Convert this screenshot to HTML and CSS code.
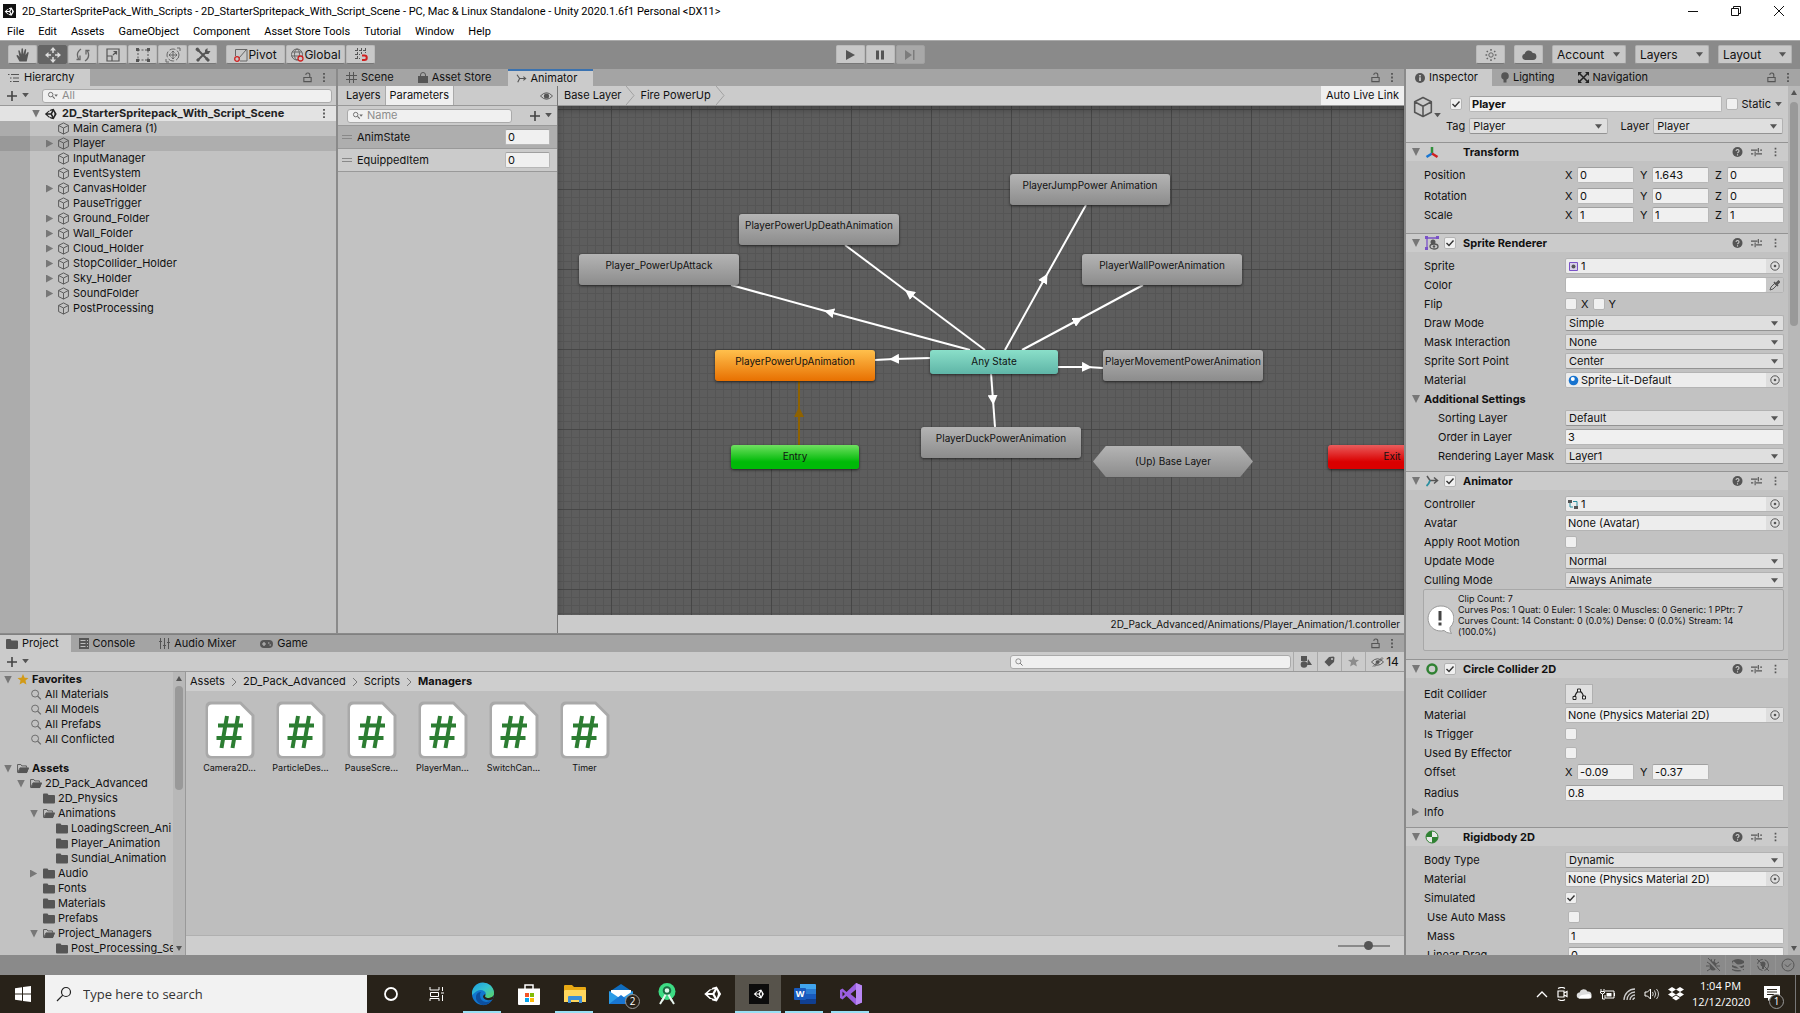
FILE: index.html
```html
<!DOCTYPE html>
<html lang="en">
<head>
    <meta charset="UTF-8">
    <meta name="viewport" content="width=device-width, initial-scale=1.0">
    <title>2D_StarterSpritePack_With_Scripts - Unity</title>
    <link rel="stylesheet" href="styles.css">
</head>
<body>
    <!-- shared icons -->
    <svg class="sprites" aria-hidden="true">
        <symbol id="cube" viewBox="0 0 14 14"><path d="M7 1l5.300 2.700v6.600L7 13l-5.300-2.700V3.700zM1.700 3.700L7 6.500l5.300-2.800M7 6.500V13" fill="none" stroke="#555" stroke-linejoin="round"/></symbol>
        <symbol id="unity" viewBox="0 0 16 16"><path d="M14.500 8L11 2 7.500 2.900 6.800 4.200H5.400L1 8l4.400 3.900h1.400l.7 1.200L11 14zM6.300 4.800l3.100-.8-1.800 3.200H3.800zM3.800 8.800h3.800l1.800 3.200-3.100-.8zM11 11.200L9.200 8 11 4.800l1 3.200z" fill="currentColor" fill-rule="evenodd"/></symbol>
        <symbol id="lock" viewBox="0 0 12 12"><path d="M2 6h8v4.500H2zM8.500 6V3.500a2.200 2.200 0 0 0-4.400-.3" fill="none" stroke="#555" stroke-width="1.200"/></symbol>
        <symbol id="dots" viewBox="0 0 4 12"><path d="M1 1h2v2H1zM1 5h2v2H1zM1 9h2v2H1z" fill="#555"/></symbol>
        <symbol id="plus" viewBox="0 0 12 12"><path d="M6 1v10M1 6h10" stroke="#444" stroke-width="1.600"/></symbol>
        <symbol id="down" viewBox="0 0 8 6"><path d="M0 0h8L4 5z" fill="#555"/></symbol>
        <symbol id="search" viewBox="0 0 12 12"><circle cx="5" cy="5" r="3.800" fill="none" stroke="#666"/><path d="M7.800 7.800l3.500 3.500" stroke="#666" stroke-width="1.400"/></symbol>
        <symbol id="searchdrop" viewBox="0 0 12 10"><circle cx="4" cy="4" r="2.500" fill="none" stroke="#666"/><path d="M6 6l2.500 2.500" stroke="#666" stroke-width="1.200"/><path d="M8 4h4l-2 2.500z" fill="#666"/></symbol>
        <symbol id="folder" viewBox="0 0 12 10"><path d="M0 1q0-1 1-1h3.500l1 1.500H11q1 0 1 1V9q0 1-1 1H1q-1 0-1-1z" fill="#555"/></symbol>
        <symbol id="folderopen" viewBox="0 0 13 10"><path d="M.6 9V.7h3.600l1 1.500h5V4M.8 9.400L3.300 4.300h9.200L10.500 9.400z" fill="none" stroke="#555"/><path d="M1 9.800L3.400 4.500h9.400L10.600 9.800z" fill="#555"/></symbol>
        <symbol id="help" viewBox="0 0 10 10"><circle cx="5" cy="5" r="5" fill="#555"/><path d="M3.500 3.900a1.500 1.500 0 1 1 2.200 1.400q-.7.400-.7 1M5 7.300v1.200" fill="none" stroke="#ccc" stroke-width="1.100"/></symbol>
        <symbol id="preset" viewBox="0 0 12 10"><path d="M0 3h7M10 3h2M0 7h2.500M5.500 7H12M8 .5v5M4.500 4.500v5" stroke="#555" stroke-width="1.200"/></symbol>
        <symbol id="picker" viewBox="0 0 10 10"><circle cx="5" cy="5" r="4.200" fill="none" stroke="#555"/><circle cx="5" cy="5" r="1.300" fill="#555"/></symbol>
        <symbol id="anim" viewBox="0 0 14 12"><path d="M1 1l3.500 5H12M4.500 6L2 11M9.500 3.500L12.500 6 9.500 8.500" fill="none" stroke="#555" stroke-width="1.500"/></symbol>
        <symbol id="eye" viewBox="0 0 14 8"><path d="M.5 4Q7-3 13.500 4 7 11 .5 4z" fill="none" stroke="#555"/><circle cx="7" cy="4" r="2.800" fill="#555"/></symbol>
        <symbol id="star" viewBox="0 0 12 12"><path d="M6 0l1.700 4 4.300.4-3.300 2.800 1 4.300L6 9.200l-3.700 2.300 1-4.300L0 4.400 4.300 4z" fill="currentColor"/></symbol>
        <symbol id="grip" viewBox="0 0 10 6"><path d="M0 1.500h10M0 4.500h10" stroke="#888"/></symbol>
        <symbol id="script" viewBox="0 0 52 60"><path d="M7 1.500h30L50.500 15v38q0 5.500-5.500 5.500H7q-5.500 0-5.500-5.500V7Q1.500 1.500 7 1.500z" fill="#a9a9a9"/><path d="M8 4.500h28L47.500 16v36q0 4-4 4H8q-4 0-4-4V8.500q0-4 4-4z" fill="#fff"/><path d="M23 16l-5.500 32M34 16l-5.500 32M14 25.500h25M12.500 38h25" stroke="#2c7d32" stroke-width="4" fill="none"/></symbol>
    </svg>

    <header class="titlebar">
        <span class="app-icon"><svg width="11" height="11"><use href="#unity"/></svg></span>
        <h1>2D_StarterSpritePack_With_Scripts - 2D_StarterSpritepack_With_Script_Scene - PC, Mac &amp; Linux Standalone - Unity 2020.1.6f1 Personal &lt;DX11&gt;</h1>
        <div class="window-buttons">
            <button aria-label="Minimize"><svg width="12" height="12"><path d="M1 6.500h10" stroke="#111"/></svg></button>
            <button aria-label="Restore"><svg width="12" height="12"><path d="M1.500 3.500h7v7h-7zM3.500 3.500v-2h7v7h-2" fill="none" stroke="#111"/></svg></button>
            <button aria-label="Close"><svg width="12" height="12"><path d="M1 1l10 10M11 1L1 11" stroke="#111"/></svg></button>
        </div>
    </header>
    <nav class="menubar">
        <button>File</button><button>Edit</button><button>Assets</button><button>GameObject</button><button>Component</button><button>Asset Store Tools</button><button>Tutorial</button><button>Window</button><button>Help</button>
    </nav>

    <div class="toolbar">
        <div class="tool-left">
            <div class="tool-group">
                <button aria-label="Hand"><svg width="16" height="16"><path d="M4.500 14.500L1.500 9q0-1.500 1.500-.8L4.500 10 3.300 4q.2-1.300 1.300-.4L6.200 7.500 6.500 1.800Q7.300.6 8 1.800l.3 5.500L9.800 2.500q1-.9 1.400.3L10.500 8l2-2.800q1.200-.4 1.100.8L11.700 14.500z" fill="#555"/></svg></button>
                <button class="on" aria-label="Move"><svg width="16" height="16"><path d="M8 1v5M8 10v5M1 8h5M10 8h5" stroke="#ddd" stroke-width="1.500"/><path d="M8 0l3 3.500H5zM8 16l3-3.500H5zM0 8l3.500-3v6zM16 8l-3.500-3v6z" fill="#ddd"/></svg></button>
                <button aria-label="Rotate"><svg width="16" height="16"><path d="M6 2Q0 6 4 13M1.500 12.500h3.500v-4M10 14q6-4 2-11M14.500 3.500H11v4" fill="none" stroke="#666" stroke-width="1.300"/></svg></button>
                <button aria-label="Scale"><svg width="16" height="16"><path d="M2 2h12v12H2zM2 9h5v5M8 8l3.500-3.500M8.500 4.500h3v3" fill="none" stroke="#555" stroke-width="1.200"/></svg></button>
                <button aria-label="Rect"><svg width="16" height="16"><path d="M3 3h10v10H3z" fill="none" stroke="#555" stroke-dasharray="2 1.500"/><path d="M1 1h3v3H1zM12 1h3v3h-3zM1 12h3v3H1zM12 12h3v3h-3z" fill="#555"/></svg></button>
                <button aria-label="Transform"><svg width="16" height="16"><circle cx="8" cy="8" r="6" fill="none" stroke="#666" stroke-dasharray="6 2"/><path d="M8 4v8M4 8h8M6.500 5.500L8 4l1.500 1.500M6.500 10.500L8 12l1.500-1.500M5.500 6.500L4 8l1.500 1.500M10.500 6.500L12 8l-1.500 1.500M12 1h3v3M1 12v3h3" fill="none" stroke="#666"/></svg></button>
                <button aria-label="Custom tools"><svg width="16" height="16"><path d="M3 3l10 10M3 13l7-7" stroke="#555" stroke-width="2"/><path d="M1 1l2-.5 2 2.500-2 2L.5 3zM10 3l2.500-2v3h3L13.500 7H10zM10 12l2-2 3 3-2 2zM1 13l2-2 2 2-2 2z" fill="#555"/></svg></button>
            </div>
            <div class="tool-group pivot">
                <button><svg width="14" height="14"><path d="M1.500 8V1.500H13V13H6M5 10l7-8" fill="none" stroke="#666"/><circle cx="3" cy="11" r="2.300" fill="none" stroke="#d02020" stroke-width="1.300"/></svg>Pivot</button>
                <button><svg width="14" height="14"><circle cx="7" cy="6.500" r="5.500" fill="none" stroke="#666"/><ellipse cx="7" cy="6.500" rx="2.500" ry="5.500" fill="none" stroke="#666"/><path d="M2 4h10M1.500 8h8" stroke="#666"/><circle cx="10.500" cy="10.500" r="2.500" fill="#c8c8c8" stroke="#d02020" stroke-width="1.300"/></svg>Global</button>
            </div>
            <button aria-label="Grid snapping"><svg width="16" height="16"><path d="M4.500 1v12M8.500 1v6M12.500 1v5M2 3.500h12M2 7.500h5M2 11.500h5" stroke="#555" stroke-dasharray="3 1"/><path d="M9 8.500h2.500a2.200 2.200 0 0 1 0 4.500H9" fill="none" stroke="#d02020" stroke-width="2"/></svg></button>
        </div>
        <div class="tool-group play">
            <button aria-label="Play"><svg width="10" height="12"><path d="M1 1l9 5-9 5z" fill="#555"/></svg></button>
            <button aria-label="Pause"><svg width="10" height="12"><path d="M1 1.500h3v9H1zM6 1.500h3v9H6z" fill="#555"/></svg></button>
            <button aria-label="Step" disabled><svg width="12" height="12"><path d="M1 1l7 5-7 5zM9 1h1.500v10H9z" fill="#7c7c7c"/></svg></button>
        </div>
        <div class="tool-right">
            <button aria-label="Collaborate"><svg width="14" height="14"><circle cx="7" cy="7" r="2.200" fill="none" stroke="#666"/><path d="M7 1v1.700M7 11.300V13M1.500 7h1.700M10.800 7h1.700M2.700 3l1.200 1M10.100 10l1.200 1M2.700 11l1.200-1M10.100 4l1.200-1" stroke="#666" stroke-width="1.500"/></svg></button>
            <button aria-label="Services"><svg width="16" height="12"><path d="M4 11a3.200 3.200 0 0 1-.3-6.300A4.300 4.300 0 0 1 11.800 4 3.500 3.500 0 0 1 12 11z" fill="#555"/></svg></button>
            <select aria-label="Account"><option>Account</option></select>
            <select aria-label="Layers"><option>Layers</option></select>
            <select aria-label="Layout"><option>Layout</option></select>
        </div>
    </div>

    <main class="workspace">
        <div class="left-area">
            <div class="upper">
                <section class="panel hierarchy">
                    <div class="tabs">
                        <button class="tab active"><svg width="12" height="10"><path d="M3 1.500h8M5 5h6M5 8.500h6M0 1.500h1.500M2 5h1.500M2 8.500h1.500" stroke="#555"/></svg>Hierarchy</button>
                        <span class="tab-end"><svg width="11" height="11"><use href="#lock"/></svg><svg width="4" height="11"><use href="#dots"/></svg></span>
                    </div>
                    <div class="bar">
                        <button class="add" aria-label="Create"><svg width="12" height="12"><use href="#plus"/></svg><svg width="7" height="5"><use href="#down"/></svg></button>
                        <label class="search"><svg width="11" height="9"><use href="#searchdrop"/></svg><input type="text" placeholder="All" aria-label="Search hierarchy"></label>
                    </div>
                    <div class="scene"><i class="open"></i><svg width="14" height="14"><use href="#unity"/></svg><b>2D_StarterSpritepack_With_Script_Scene</b><svg class="more" width="4" height="11"><use href="#dots"/></svg></div>
                    <ul class="objects">
                        <li><i></i><svg><use href="#cube"/></svg>Main Camera (1)</li>
                        <li class="selected"><i class="closed"></i><svg><use href="#cube"/></svg>Player</li>
                        <li><i></i><svg><use href="#cube"/></svg>InputManager</li>
                        <li><i></i><svg><use href="#cube"/></svg>EventSystem</li>
                        <li><i class="closed"></i><svg><use href="#cube"/></svg>CanvasHolder</li>
                        <li><i></i><svg><use href="#cube"/></svg>PauseTrigger</li>
                        <li><i class="closed"></i><svg><use href="#cube"/></svg>Ground_Folder</li>
                        <li><i class="closed"></i><svg><use href="#cube"/></svg>Wall_Folder</li>
                        <li><i class="closed"></i><svg><use href="#cube"/></svg>Cloud_Holder</li>
                        <li><i class="closed"></i><svg><use href="#cube"/></svg>StopCollider_Holder</li>
                        <li><i class="closed"></i><svg><use href="#cube"/></svg>Sky_Holder</li>
                        <li><i class="closed"></i><svg><use href="#cube"/></svg>SoundFolder</li>
                        <li><i></i><svg><use href="#cube"/></svg>PostProcessing</li>
                    </ul>
                </section>

                <section class="panel animator">
                    <div class="tabs">
                        <button class="tab"><svg width="11" height="11"><path d="M3.500 0v11M7.500 0v11M0 3.500h11M0 7.500h11" stroke="#555"/></svg>Scene</button>
                        <button class="tab"><svg width="10" height="12"><path d="M0 4h10v7H0z" fill="#555"/><path d="M2.500 5V3a2.500 2.500 0 0 1 5 0v2" fill="none" stroke="#555"/></svg>Asset Store</button>
                        <button class="tab active focus"><svg width="11" height="9"><use href="#anim"/></svg>Animator</button>
                        <span class="tab-end"><svg width="11" height="11"><use href="#lock"/></svg><svg width="4" height="11"><use href="#dots"/></svg></span>
                    </div>
                    <div class="animator-body">
                        <div class="params">
                            <div class="bar modes"><button>Layers</button><button class="on">Parameters</button><button class="eye" aria-label="Hide"><svg width="13" height="8"><use href="#eye"/></svg></button></div>
                            <div class="bar"><label class="search"><svg width="11" height="9"><use href="#searchdrop"/></svg><input type="text" placeholder="Name" aria-label="Search parameters"></label><button class="add" aria-label="Add parameter"><svg width="12" height="12"><use href="#plus"/></svg><svg width="7" height="5"><use href="#down"/></svg></button></div>
                            <div class="param on"><svg width="10" height="6"><use href="#grip"/></svg><label for="animstate">AnimState</label><input id="animstate" type="text" value="0"></div>
                            <div class="param"><svg width="10" height="6"><use href="#grip"/></svg><label for="equipped">EquippedItem</label><input id="equipped" type="text" value="0"></div>
                        </div>
                        <div class="graph">
                            <div class="bar crumbs">
                                <button>Base Layer</button><svg width="9" height="19"><path d="M0 0l8 9.500L0 19" fill="none" stroke="#a0a0a0"/></svg>
                                <button>Fire PowerUp</button><svg width="9" height="19"><path d="M0 0l8 9.500L0 19" fill="none" stroke="#a0a0a0"/></svg>
                                <button class="live">Auto Live Link</button>
                            </div>
                            <div class="canvas">
                                <svg class="edges">
                                    <defs>
                                        <marker id="arrow" viewBox="0 0 10 10" refX="5" refY="5" markerWidth="10" markerHeight="10" markerUnits="userSpaceOnUse" orient="auto"><path d="M0 0l10 5-10 5z" fill="#fff"/></marker>
                                        <marker id="arrow-entry" viewBox="0 0 10 10" refX="5" refY="5" markerWidth="10" markerHeight="10" markerUnits="userSpaceOnUse" orient="auto"><path d="M0 0l10 5-10 5z"/></marker>
                                    </defs>
                                    <path d="M412 244L271 206 173 179"/>
                                    <path d="M427 244L351 187 287 139"/>
                                    <path d="M447 244L487 172 528 99"/>
                                    <path d="M464 244L520 214 585 179"/>
                                    <path d="M372 252L336 253 317 254"/>
                                    <path d="M499 261L529 261 545 262"/>
                                    <path d="M433 267L435 294 437 321"/>
                                    <path class="entry-edge" d="M241 339V306 275"/>
                                </svg>
                                <div class="node n-attack">Player_PowerUpAttack</div>
                                <div class="node n-death">PlayerPowerUpDeathAnimation</div>
                                <div class="node n-jump">PlayerJumpPower Animation</div>
                                <div class="node n-wall">PlayerWallPowerAnimation</div>
                                <div class="node n-default">PlayerPowerUpAnimation</div>
                                <div class="node small n-any">Any State</div>
                                <div class="node n-move">PlayerMovementPowerAnimation</div>
                                <div class="node n-duck">PlayerDuckPowerAnimation</div>
                                <div class="node small n-entry">Entry</div>
                                <div class="node n-up">(Up) Base Layer</div>
                                <div class="node small n-exit">Exit</div>
                            </div>
                            <div class="path">2D_Pack_Advanced/Animations/Player_Animation/1.controller</div>
                        </div>
                    </div>
                </section>
            </div>

            <section class="panel project">
                <div class="tabs">
                    <button class="tab active"><svg width="12" height="10"><use href="#folder"/></svg>Project</button>
                    <button class="tab"><svg width="10" height="11"><path d="M0 0h10v11H0z" fill="#555"/><path d="M1.500 2.500h5M1.500 5.500h5M1.500 8.500h5M8 2.500h1M8 5.500h1M8 8.500h1" stroke="#bbb"/></svg>Console</button>
                    <button class="tab"><svg width="11" height="11"><path d="M1.500 0v11M5.500 0v11M9.500 0v11M0 3.500h3M4 7.500h3M8 4.500h3" stroke="#555"/></svg>Audio Mixer</button>
                    <button class="tab"><svg width="13" height="8"><rect width="13" height="8" rx="4" fill="#555"/><path d="M2 4h4M4 2v4M8 3h1.500M9.500 5H11" stroke="#bbb" stroke-width="1.200"/></svg>Game</button>
                    <span class="tab-end"><svg width="11" height="11"><use href="#lock"/></svg><svg width="4" height="11"><use href="#dots"/></svg></span>
                </div>
                <div class="bar">
                    <button class="add" aria-label="Create asset"><svg width="12" height="12"><use href="#plus"/></svg><svg width="7" height="5"><use href="#down"/></svg></button>
                    <label class="search asset-search"><svg width="8" height="8"><use href="#search"/></svg><input type="text" aria-label="Search assets"></label>
                    <div class="filters">
                        <button aria-label="Filter by type"><svg width="12" height="12"><path d="M1 0h6v5H1zM8 3l4 6H7z" fill="#555"/><circle cx="4" cy="8.500" r="3.300" fill="#555"/></svg></button>
                        <button aria-label="Filter by label"><svg width="11" height="11"><path d="M5 1l4.500-.5L10.500 1.500 10 6 5 10.500.5 6z" fill="#555"/><circle cx="8" cy="3" r="1" fill="#ccc"/></svg></button>
                        <button class="faded" aria-label="Save search"><svg width="11" height="11"><use href="#star"/></svg></button>
                        <button class="hidden-count"><svg width="13" height="10" viewBox="0 0 14 10"><path d="M.5 5Q7-2 13.500 5 7 12 .5 5zM2 10L12 0M4 10L13 1" fill="none" stroke="#555"/><circle cx="7" cy="5" r="2" fill="#555"/></svg>14</button>
                    </div>
                </div>
                <div class="project-body">
                    <div class="folders">
                        <ul>
                            <li class="d0"><i class="open"></i><svg class="gold"><use href="#star"/></svg><b>Favorites</b></li>
                            <li class="d1"><i></i><svg><use href="#search"/></svg>All Materials</li>
                            <li class="d1"><i></i><svg><use href="#search"/></svg>All Models</li>
                            <li class="d1"><i></i><svg><use href="#search"/></svg>All Prefabs</li>
                            <li class="d1 last"><i></i><svg><use href="#search"/></svg>All Conflicted</li>
                            <li class="d0"><i class="open"></i><svg><use href="#folderopen"/></svg><b>Assets</b></li>
                            <li class="d1"><i class="open"></i><svg><use href="#folderopen"/></svg>2D_Pack_Advanced</li>
                            <li class="d2"><i></i><svg><use href="#folder"/></svg>2D_Physics</li>
                            <li class="d2"><i class="open"></i><svg><use href="#folderopen"/></svg>Animations</li>
                            <li class="d3"><i></i><svg><use href="#folder"/></svg>LoadingScreen_Ani</li>
                            <li class="d3"><i></i><svg><use href="#folder"/></svg>Player_Animation</li>
                            <li class="d3"><i></i><svg><use href="#folder"/></svg>Sundial_Animation</li>
                            <li class="d2"><i class="closed"></i><svg><use href="#folder"/></svg>Audio</li>
                            <li class="d2"><i></i><svg><use href="#folder"/></svg>Fonts</li>
                            <li class="d2"><i></i><svg><use href="#folder"/></svg>Materials</li>
                            <li class="d2"><i></i><svg><use href="#folder"/></svg>Prefabs</li>
                            <li class="d2"><i class="open"></i><svg><use href="#folderopen"/></svg>Project_Managers</li>
                            <li class="d3"><i></i><svg><use href="#folder"/></svg>Post_Processing_Se</li>
                        </ul>
                        <div class="scroll"><i class="up"></i><span class="thumb"></span><i class="open"></i></div>
                    </div>
                    <div class="assets">
                        <nav class="asset-path"><a href="#">Assets</a><svg width="6" height="8"><path d="M1 0l4 4-4 4" fill="none" stroke="#777"/></svg><a href="#">2D_Pack_Advanced</a><svg width="6" height="8"><path d="M1 0l4 4-4 4" fill="none" stroke="#777"/></svg><a href="#">Scripts</a><svg width="6" height="8"><path d="M1 0l4 4-4 4" fill="none" stroke="#777"/></svg><b>Managers</b></nav>
                        <div class="files">
                            <figure><svg><use href="#script"/></svg><figcaption>Camera2D...</figcaption></figure>
                            <figure><svg><use href="#script"/></svg><figcaption>ParticleDes...</figcaption></figure>
                            <figure><svg><use href="#script"/></svg><figcaption>PauseScre...</figcaption></figure>
                            <figure><svg><use href="#script"/></svg><figcaption>PlayerMan...</figcaption></figure>
                            <figure><svg><use href="#script"/></svg><figcaption>SwitchCan...</figcaption></figure>
                            <figure><svg><use href="#script"/></svg><figcaption>Timer</figcaption></figure>
                        </div>
                        <div class="zoom"><input type="range" min="0" max="100" value="60" aria-label="Icon size"></div>
                    </div>
                </div>
            </section>
        </div>

        <section class="panel inspector">
            <div class="tabs">
                <button class="tab active"><svg width="10" height="10"><circle cx="5" cy="5" r="5" fill="#555"/><path d="M5 2v1.500M5 4.300V8" stroke="#ddd" stroke-width="1.500"/></svg>Inspector</button>
                <button class="tab"><svg width="8" height="11"><circle cx="4" cy="4" r="3.800" fill="#555"/><path d="M2.500 7h3v3.500h-3z" fill="#555"/></svg>Lighting</button>
                <button class="tab"><svg width="11" height="11"><path d="M1 1l9 9M10 1L1 10" stroke="#222" stroke-width="1.500"/><path d="M0 0h4L0 4zM11 0H7l4 4zM0 11h4L0 7zM11 11H7l4-4z" fill="#222"/></svg>Navigation</button>
                <span class="tab-end"><svg width="11" height="11"><use href="#lock"/></svg><svg width="4" height="11"><use href="#dots"/></svg></span>
            </div>
            <div class="inspector-body">
                <div class="components">
                    <div class="object">
                        <button class="object-icon" aria-label="Icon"><svg width="22" height="22"><use href="#cube"/></svg><svg width="7" height="5"><use href="#down"/></svg></button>
                        <div class="object-fields">
                            <div class="line">
                                <input type="checkbox" checked aria-label="Active">
                                <input type="text" class="name" value="Player" aria-label="Name">
                                <input type="checkbox" id="static"><label for="static">Static</label><svg width="7" height="5"><use href="#down"/></svg>
                            </div>
                            <div class="line">
                                <label for="tag">Tag</label><select id="tag"><option>Player</option></select>
                                <label for="layer" class="layer">Layer</label><select id="layer"><option>Player</option></select>
                            </div>
                        </div>
                    </div>

                    <article>
                        <h2><i class="open"></i><svg class="type" width="14" height="14"><path d="M7 8V2" stroke="#2f8f3a" stroke-width="2.500"/><path d="M7 8.500L1.500 12" stroke="#1976d2" stroke-width="2.500"/><path d="M7 8.500l5.500 3.500" stroke="#d02020" stroke-width="2.500"/></svg><span class="no-check"></span>Transform<span class="tools"><svg><use href="#help"/></svg><svg><use href="#preset"/></svg><svg><use href="#dots"/></svg></span></h2>
                        <div class="rows transform">
                            <div class="row after"><span>Position</span><div class="vec"><label for="px">X</label><input type="text" id="px" value="0"><label for="py">Y</label><input type="text" id="py" value="1.643"><label for="pz">Z</label><input type="text" id="pz" value="0"></div></div>
                            <div class="row"><span>Rotation</span><div class="vec"><label for="rx">X</label><input type="text" id="rx" value="0"><label for="ry">Y</label><input type="text" id="ry" value="0"><label for="rz">Z</label><input type="text" id="rz" value="0"></div></div>
                            <div class="row"><span>Scale</span><div class="vec"><label for="sx">X</label><input type="text" id="sx" value="1"><label for="sy">Y</label><input type="text" id="sy" value="1"><label for="sz">Z</label><input type="text" id="sz" value="1"></div></div>
                        </div>
                    </article>

                    <article>
                        <h2><i class="open"></i><svg class="type" width="14" height="14"><path d="M2 2h10M2 2v10" stroke="#7a52c7" stroke-width="1.300"/><path d="M0 0h3v3H0zM11 0h3v3h-3zM0 11h3v3H0z" fill="#7a52c7"/><circle cx="8" cy="6" r="2.500" fill="#555"/><ellipse cx="9" cy="10.500" rx="4" ry="2.500" fill="#c8c8c8" stroke="#555" stroke-width="1.300"/><circle cx="9" cy="10.500" r="1.200" fill="#555"/></svg><input type="checkbox" checked aria-label="Enable Sprite Renderer">Sprite Renderer<span class="tools"><svg><use href="#help"/></svg><svg><use href="#preset"/></svg><svg><use href="#dots"/></svg></span></h2>
                        <div class="rows">
                            <div class="row"><label for="sprite">Sprite</label><div class="ref"><svg width="11" height="11"><path d="M1.500 1.500h8v8h-8z" fill="#d8d0e8" stroke="#7a52c7"/><circle cx="5.500" cy="5.500" r="2" fill="#555"/></svg><input type="text" id="sprite" value="1"><button aria-label="Pick sprite"><svg width="10" height="10"><use href="#picker"/></svg></button></div></div>
                            <div class="row"><label for="color">Color</label><div class="ref color"><input type="text" id="color"><button aria-label="Pick colour"><svg width="11" height="11"><path d="M1 10l1-3 4-4 2 2-4 4z" fill="none" stroke="#555"/><path d="M5 2l4 4M6.500 4l3-3 1 1-3 3z" stroke="#555" stroke-width="1.500"/></svg></button></div></div>
                            <div class="row"><span>Flip</span><div class="checks"><input type="checkbox" id="fx"><label for="fx">X</label><input type="checkbox" id="fy"><label for="fy">Y</label></div></div>
                            <div class="row"><label for="draw">Draw Mode</label><select id="draw"><option>Simple</option></select></div>
                            <div class="row"><label for="mask">Mask Interaction</label><select id="mask"><option>None</option></select></div>
                            <div class="row"><label for="sort">Sprite Sort Point</label><select id="sort"><option>Center</option></select></div>
                            <div class="row"><label for="mat">Material</label><div class="ref"><svg width="11" height="11"><circle cx="5.500" cy="5.500" r="4.800" fill="#1773cf"/><circle cx="4.800" cy="4" r="2" fill="#fff"/></svg><input type="text" id="mat" value="Sprite-Lit-Default"><button aria-label="Pick material"><svg width="10" height="10"><use href="#picker"/></svg></button></div></div>
                            <div class="row foldout"><i class="open"></i><b>Additional Settings</b></div>
                            <div class="row sub"><label for="slayer">Sorting Layer</label><select id="slayer"><option>Default</option></select></div>
                            <div class="row sub"><label for="order">Order in Layer</label><input type="text" id="order" value="3"></div>
                            <div class="row sub"><label for="rmask">Rendering Layer Mask</label><select id="rmask"><option>Layer1</option></select></div>
                        </div>
                    </article>

                    <article>
                        <h2><i class="open"></i><svg class="type" width="14" height="14"><path d="M2 2l3 4.500h7M9 3.500l3.500 3L9 9.500" fill="none" stroke="#555" stroke-width="1.500"/><path d="M5 6.500Q4 10 1.500 12" fill="none" stroke="#2a8fa0" stroke-width="1.800"/></svg><input type="checkbox" checked aria-label="Enable Animator">Animator<span class="tools"><svg><use href="#help"/></svg><svg><use href="#preset"/></svg><svg><use href="#dots"/></svg></span></h2>
                        <div class="rows">
                            <div class="row"><label for="ctrl">Controller</label><div class="ref"><svg width="11" height="11"><path d="M2 4v4h3M5 2.500h4V7" fill="none" stroke="#2a8fa0"/><path d="M0 1h4v3H0zM6 7h4v3H6z" fill="#555"/></svg><input type="text" id="ctrl" value="1"><button aria-label="Pick controller"><svg width="10" height="10"><use href="#picker"/></svg></button></div></div>
                            <div class="row"><label for="avatar">Avatar</label><div class="ref"><input type="text" id="avatar" value="None (Avatar)"><button aria-label="Pick avatar"><svg width="10" height="10"><use href="#picker"/></svg></button></div></div>
                            <div class="row"><label for="root">Apply Root Motion</label><input type="checkbox" id="root"></div>
                            <div class="row"><label for="update">Update Mode</label><select id="update"><option>Normal</option></select></div>
                            <div class="row"><label for="cull">Culling Mode</label><select id="cull"><option>Always Animate</option></select></div>
                            <div class="helpbox">
                                <svg width="28" height="30"><path d="M14 1a12.500 12.500 0 1 0 4 24.500q2 2.500 7.500 3-2-2-1.500-6A12.500 12.500 0 0 0 14 1z" fill="#fff" stroke="#999"/><path d="M14 6v9.500M14 17.500v3" stroke="#444" stroke-width="3"/></svg>
                                <p>Clip Count: 7<br>Curves Pos: 1 Quat: 0 Euler: 1 Scale: 0 Muscles: 0 Generic: 1 PPtr: 7<br>Curves Count: 14 Constant: 0 (0.0%) Dense: 0 (0.0%) Stream: 14 (100.0%)</p>
                            </div>
                        </div>
                    </article>

                    <article>
                        <h2><i class="open"></i><svg class="type" width="14" height="14"><circle cx="7" cy="7" r="4.500" fill="none" stroke="#2f8132" stroke-width="2.500"/></svg><input type="checkbox" checked aria-label="Enable Circle Collider 2D">Circle Collider 2D<span class="tools"><svg><use href="#help"/></svg><svg><use href="#preset"/></svg><svg><use href="#dots"/></svg></span></h2>
                        <div class="rows">
                            <div class="row tall"><span>Edit Collider</span><button class="edit" aria-label="Edit collider"><svg width="14" height="12"><path d="M2.500 9Q4 5 6 3M8 3q3 2 3.500 6" fill="none" stroke="#222" stroke-width="1.200"/><path d="M5.500 1h3v3h-3zM1 8.500h3v3H1zM10.500 8h3v3h-3z" fill="#eee" stroke="#222"/></svg></button></div>
                            <div class="row"><label for="cmat">Material</label><div class="ref"><input type="text" id="cmat" value="None (Physics Material 2D)"><button aria-label="Pick physics material"><svg width="10" height="10"><use href="#picker"/></svg></button></div></div>
                            <div class="row"><label for="trigger">Is Trigger</label><input type="checkbox" id="trigger"></div>
                            <div class="row"><label for="effector">Used By Effector</label><input type="checkbox" id="effector"></div>
                            <div class="row after"><span>Offset</span><div class="vec"><label for="ox">X</label><input type="text" id="ox" value="-0.09"><label for="oy">Y</label><input type="text" id="oy" value="-0.37"></div></div>
                            <div class="row"><label for="radius">Radius</label><input type="text" id="radius" value="0.8"></div>
                            <div class="row foldout"><i class="closed"></i><span>Info</span></div>
                        </div>
                    </article>

                    <article>
                        <h2><i class="open"></i><svg class="type" width="14" height="14"><circle cx="7" cy="7" r="6" fill="#e8e8e8" stroke="#2f8132"/><path d="M7 7V1a6 6 0 0 0-6 6zM7 7v6a6 6 0 0 0 6-6z" fill="#2f8132"/></svg><span class="no-check"></span>Rigidbody 2D<span class="tools"><svg><use href="#help"/></svg><svg><use href="#preset"/></svg><svg><use href="#dots"/></svg></span></h2>
                        <div class="rows">
                            <div class="row"><label for="btype">Body Type</label><select id="btype"><option>Dynamic</option></select></div>
                            <div class="row"><label for="rmat">Material</label><div class="ref"><input type="text" id="rmat" value="None (Physics Material 2D)"><button aria-label="Pick body material"><svg width="10" height="10"><use href="#picker"/></svg></button></div></div>
                            <div class="row"><label for="sim">Simulated</label><input type="checkbox" id="sim" checked></div>
                            <div class="row inset"><label for="auto">Use Auto Mass</label><input type="checkbox" id="auto"></div>
                            <div class="row inset"><label for="mass">Mass</label><input type="text" id="mass" value="1"></div>
                            <div class="row inset"><label for="drag">Linear Drag</label><input type="text" id="drag" value="0"></div>
                        </div>
                    </article>
                </div>
                <div class="scroll"><i class="up"></i><span class="thumb long"></span><i class="open"></i></div>
            </div>
        </section>
    </main>

    <div class="statusbar">
        <button aria-label="Debug mode"><svg width="14" height="14"><ellipse cx="7" cy="8" rx="3.500" ry="4.500" fill="#555"/><path d="M1 4l3 2M13 4l-3 2M0 8h3M14 8h-3M1 13l3-2M13 13l-3-2M5 1l1 3M9 1L8 4" stroke="#555"/><path d="M1 1l12 12" stroke="#8a8a8a" stroke-width="2"/><path d="M2 0l12 13" stroke="#555"/></svg></button>
        <button aria-label="Cache server"><svg width="14" height="14"><path d="M1 3q6-4 12 0v2Q7 8 1 5zM1 7q6 3 12 0v2q-6 3-12 0zM1 11q6 2 12 0v1q-6 3-12 0z" fill="#555"/><path d="M2 4l11 10" stroke="#8a8a8a" stroke-width="2"/></svg></button>
        <button aria-label="Auto lighting"><svg width="14" height="14"><circle cx="7" cy="7" r="5.500" fill="none" stroke="#555" stroke-dasharray="7 2"/><circle cx="7" cy="6" r="2.500" fill="#555"/><path d="M6 8h2v3H6z" fill="#555"/><path d="M1 1l12 12" stroke="#555"/></svg></button>
        <button aria-label="Progress"><svg width="14" height="14"><circle cx="7" cy="7" r="6" fill="none" stroke="#555"/><path d="M4 6.500L6.500 9 10 5.500" fill="none" stroke="#555"/></svg></button>
    </div>

    <footer class="taskbar">
        <button class="start" aria-label="Start"><svg width="16" height="16"><path d="M0 2.300l7-1v6.200H0zM8 1.100L16 0v7.500H8zM0 8.500h7v6.200l-7-1zM8 8.500h8V16l-8-1.100z" fill="#fff"/></svg></button>
        <label class="win-search"><svg width="16" height="16"><circle cx="10" cy="6" r="4.500" fill="none" stroke="#222" stroke-width="1.200"/><path d="M6.800 9.200L1 15" stroke="#222" stroke-width="1.200"/></svg><input type="text" placeholder="Type here to search" aria-label="Search Windows"></label>
        <div class="apps">
            <button aria-label="Cortana"><svg width="16" height="16"><circle cx="8" cy="8" r="6" fill="none" stroke="#fff" stroke-width="1.800"/></svg></button>
            <button aria-label="Task view"><svg width="16" height="16"><path d="M1 1v3h9V1M1.500 6.500h8v4h-8zM1 15v-2.500h9V15M13.500 1v4M13.500 9v6M12 7h3" fill="none" stroke="#fff"/></svg></button>
            <button class="running" aria-label="Edge"><svg width="24" height="24"><defs><linearGradient id="edge" x2="1" y2="1"><stop stop-color="#1b9de2"/><stop offset=".5" stop-color="#35c1d0"/><stop offset="1" stop-color="#5ed65a"/></linearGradient></defs><circle cx="12" cy="12" r="11" fill="#1277cf"/><path d="M1 12A11 11 0 0 1 23 11q0 5-5 5-4 0-4-2 2-3-1-5-3-2-7 0-3 2-5 4z" fill="url(#edge)"/><path d="M9 13q0 6 6 7 3 0 6-2-4 6-10 5-7-3-6-9 1-4 5-4-1 1-1 3z" fill="#0c4f9e"/><path d="M14 14q0 2 4 2 3 0 5-3l-1 4q-3 2-6 1-4-1-4-4 1-1 2-2 1 1 0 2z" fill="#282219"/></svg></button>
            <button aria-label="Store"><svg width="22" height="22"><path d="M7 6V2h8v4" fill="none" stroke="#fff" stroke-width="1.500"/><path d="M0 5.500h22V21q0 1-1 1H1q-1 0-1-1z" fill="#fff"/><path d="M7 10h4v4H7z" fill="#f35325"/><path d="M12 10h4v4h-4z" fill="#81bc06"/><path d="M7 15h4v4H7z" fill="#05a6f0"/><path d="M12 15h4v4h-4z" fill="#ffba08"/></svg></button>
            <button class="running" aria-label="File Explorer"><svg width="22" height="20"><path d="M0 2q0-1 1-1h7l2 2h11q1 0 1 1v14H0z" fill="#e8a914"/><path d="M1 6h21v12H0V7z" fill="#ffd75e"/><path d="M4 19v-6q0-1 1-1h12q1 0 1 1v6h-3v-3H7v3z" fill="#3b8ed8"/></svg></button>
            <button aria-label="Mail"><svg width="24" height="20"><path d="M0 8L12 0l12 8v12H0z" fill="#0f6cbd"/><path d="M2 6h20v8H2z" fill="#fff"/><path d="M0 7l12 8L24 7v13H0z" fill="#2b9be6"/><path d="M0 20L12 11l12 9z" fill="#1976d2"/></svg><span class="badge">2</span></button>
            <button aria-label="Android Studio"><svg width="20" height="24"><path d="M9 12L3 22M11 12l6 10" stroke="#e8f5ee" stroke-width="2"/><circle cx="10" cy="9.500" r="8.500" fill="#3ddc84"/><path d="M10 10L5 19M10 10l5 9" stroke="#e8f5ee" stroke-width="2"/><circle cx="10" cy="8.500" r="3.300" fill="#dff8ea" stroke="#1b6b42" stroke-width="2"/></svg></button>
            <button class="hub" aria-label="Unity Hub"><svg width="20" height="20"><use href="#unity"/></svg></button>
            <button class="running current" aria-label="Unity"><span class="unity-tile"><svg width="12" height="12"><use href="#unity"/></svg></span></button>
            <button class="running" aria-label="Word"><svg width="22" height="20"><path d="M6 0h15q1 0 1 1v4H6z" fill="#41a5ee"/><path d="M6 5h16v5H6z" fill="#2b7cd3"/><path d="M6 10h16v5H6z" fill="#185abd"/><path d="M6 15h16v4q0 1-1 1H6z" fill="#103f91"/><rect y="4" width="12" height="12" rx="1" fill="#185abd"/><text x="6" y="13" text-anchor="middle" class="word">W</text></svg></button>
            <button class="running" aria-label="Visual Studio"><svg width="22" height="22"><path d="M16 0l6 2.500v17L16 22 6.500 13 2.500 16.500 0 15V7l2.500-1.500L6.500 9zM16 6.500L10.500 11l5.500 4.500zM2.500 8.500v5L5 11z" fill="#9a5fe0" fill-rule="evenodd"/><path d="M16 0l6 2.500v17L16 22z" fill="#b987f4"/></svg></button>
        </div>
        <div class="tray">
            <svg width="12" height="12"><path d="M1 9l5-5 5 5" fill="none" stroke="#fff" stroke-width="1.300"/></svg>
            <svg width="12" height="14"><path d="M2 4h6v6H2zM8 6l3-1.500v5L8 8M2 1.500Q6-.5 9 1.500M2 12.500q4 2 7 0" fill="none" stroke="#fff" stroke-width="1.200"/></svg>
            <svg width="16" height="12"><path d="M4 10.500a3 3 0 0 1-.5-6A4.300 4.300 0 0 1 11.500 3.500 3.500 3.500 0 0 1 12.500 10.500z" fill="#ddd"/><path d="M3 10.500q0-3 3-3.500l7-1q2.500 1 2.500 3t-2.500 1.500z" fill="#fff"/></svg>
            <svg width="15" height="12"><path d="M5 3h9v7H5V7M14.500 5v3M1 1v2M4 1v2M.5 3.500h4V5q-2 2-4 0zM2.500 6v5H5" fill="none" stroke="#fff"/><path d="M6.500 5h5v3.500h-5z" fill="#fff"/></svg>
            <svg width="13" height="13"><path d="M1 12A11 11 0 0 1 12 1M4 12a8 8 0 0 1 8-8M7 12a5 5 0 0 1 5-5M10 12a2 2 0 0 1 2-2" fill="none" stroke="#ccc" stroke-width="1.300"/></svg>
            <svg width="16" height="12"><path d="M1 4h2.500l3-3v10l-3-3H1z" fill="none" stroke="#fff"/><path d="M8.500 4q1.500 2 0 4M10.500 2.500q2.500 3.500 0 7M12.500 1q4 5 0 10" fill="none" stroke="#ccc"/></svg>
            <svg width="16" height="14"><path d="M4 0l4 2.500L4 5 0 2.500zM12 0l4 2.500L12 5 8 2.500zM4 5l4 2.500L4 10 0 7.500zM12 5l4 2.500-4 2.500-4-2.500zM8 8.500l4 2.500-4 2.500L4 11z" fill="#fff"/></svg>
            <time>1:04 PM<br>12/12/2020</time>
            <button class="notify" aria-label="Notifications"><svg width="16" height="16"><path d="M0 0h16v12H7l-3 3v-3H0z" fill="#fff"/><path d="M3 3.500h10M3 6h10M3 8.500h7" stroke="#282219"/></svg><span class="badge">1</span></button>
            <span class="desktop"></span>
        </div>
    </footer>
</body>
</html>
```

FILE: styles.css
```css
* {
    box-sizing: border-box;
}

body {
    margin: 0;
    height: 100vh;
    display: flex;
    flex-direction: column;
    overflow: hidden;
    background: #8a8a8a;
    color: #111;
    font: 11px/15px Inter, "Liberation Sans", sans-serif;
}

button, input, select {
    font: inherit;
    color: inherit;
    margin: 0;
    padding: 0;
    border: 0;
    border-radius: 0;
    background: none;
    min-width: 0;
}

button {
    display: flex;
    align-items: center;
    justify-content: center;
    white-space: nowrap;
}

svg {
    flex: none;
    display: block;
}

ul, p, h1, h2, figure {
    margin: 0;
    padding: 0;
    list-style: none;
}

.sprites {
    position: absolute;
    width: 0;
    height: 0;
}

/* form controls */
input[type="text"] {
    height: 16px;
    padding: 0 2px;
    background: #f0f0f0;
    border: 1px solid #b7b7b7;
    border-top-color: #a0a0a0;
    border-radius: 2px;
}

input[type="checkbox"] {
    appearance: none;
    flex: none;
    width: 12px;
    height: 12px;
    background: #f0f0f0;
    border: 1px solid #b4b4b4;
    border-radius: 2px;
}

input[type="checkbox"]:checked {
    background: #f0f0f0 url("data:image/svg+xml,%3Csvg xmlns='http://www.w3.org/2000/svg' viewBox='0 0 10 10'%3E%3Cpath d='M1.500 5l2.500 2.500L8.500 2.500' fill='none' stroke='%23333' stroke-width='1.400'/%3E%3C/svg%3E") center / 10px no-repeat;
}

select {
    appearance: none;
    height: 16px;
    padding: 0 14px 0 3px;
    border: 1px solid #b2b2b2;
    border-bottom-color: #939393;
    border-radius: 2px;
    background: #dfdfdf url("data:image/svg+xml,%3Csvg xmlns='http://www.w3.org/2000/svg' viewBox='0 0 8 5'%3E%3Cpath d='M0 0h8L4 5z' fill='%23555'/%3E%3C/svg%3E") right 5px center / 7px 5px no-repeat;
}

/* foldout triangles */
i {
    flex: none;
    width: 8px;
    height: 8px;
}

i.open, i.closed, i.up {
    background: #777;
    clip-path: polygon(0 0, 100% 0, 50% 100%);
}

i.closed {
    clip-path: polygon(0 0, 90% 50%, 0 100%);
}

i.up {
    clip-path: polygon(50% 0, 100% 100%, 0 100%);
}

/* window chrome */
.titlebar, .menubar {
    flex: none;
    display: flex;
    align-items: center;
    background: #fff;
    font-family: Roboto, "Open Sans", sans-serif;
    color: #000;
}

.titlebar {
    height: 22px;
    padding-left: 3px;
    gap: 6px;
}

.titlebar h1 {
    flex: 1;
    font-size: 11px;
    font-weight: 400;
    white-space: nowrap;
}

.app-icon {
    display: flex;
    align-items: center;
    justify-content: center;
    width: 13px;
    height: 14px;
    background: #111;
    color: #fff;
}

.window-buttons {
    display: flex;
}

.window-buttons button {
    width: 43px;
    height: 20px;
}

.menubar {
    height: 18px;
    padding-left: 7px;
    gap: 14px;
}

/* main toolbar */
.toolbar {
    flex: none;
    display: grid;
    grid-template-columns: 1fr auto 1fr;
    align-items: center;
    height: 29px;
    padding: 0 8px 1px;
    background: #8a8a8a;
    border-top: 1px solid #aaa;
}

.tool-left, .tool-group {
    display: flex;
    gap: 1px;
}

.toolbar button {
    width: 29px;
    height: 19px;
    background: #c8c8c8;
    border: 1px solid #bababa;
    border-bottom-color: #777;
    border-radius: 2px;
}

.toolbar button.on {
    background: #656565;
    border-color: #656565;
}

.toolbar button:disabled {
    background: #a8a8a8;
    border-color: #a0a0a0;
}

.toolbar .pivot {
    margin-left: 8px;
}

.toolbar .pivot button {
    width: 59px;
    font-size: 12px;
}

.toolbar .play {
    margin-right: 40px;
}

.tool-right {
    display: flex;
    justify-content: flex-end;
    gap: 9px;
}

.tool-right select {
    width: 74px;
    height: 19px;
    padding-left: 4px;
    background-color: #c8c8c8;
    font-size: 12px;
}

/* panels */
.workspace {
    flex: 1;
    display: flex;
    min-height: 0;
    gap: 2px;
}

.left-area {
    flex: 1;
    min-width: 0;
    display: flex;
    flex-direction: column;
    gap: 1px;
}

.upper {
    flex: 1;
    min-height: 0;
    display: flex;
    gap: 2px;
}

.panel {
    display: flex;
    flex-direction: column;
    min-width: 0;
    background: #c2c2c2;
    overflow: hidden;
}

.tabs {
    flex: none;
    display: flex;
    height: 17px;
    background: #a4a4a4;
}

.tab {
    gap: 4px;
    padding: 0 16px 0 8px;
}

.tab.active {
    background: #cbcbcb;
}

.tab.focus {
    border-top: 2px solid #3a72b0;
}

.tab-end {
    display: flex;
    align-items: center;
    gap: 9px;
    margin-left: auto;
    padding-right: 10px;
}

.bar {
    flex: none;
    display: flex;
    align-items: center;
    height: 20px;
    background: #cbcbcb;
    border-bottom: 1px solid #999;
}

.add {
    gap: 4px;
    margin: 0 6px;
}

.search {
    flex: 1;
    display: flex;
    align-items: center;
    gap: 4px;
    min-width: 0;
    height: 14px;
    padding-left: 4px;
    background: #f0f0f0;
    border: 1px solid #aaa;
    border-radius: 3px;
}

.search input[type="text"] {
    flex: 1;
    height: 12px;
    padding: 0;
    border: 0;
    background: none;
}

.search input::placeholder {
    color: #8c8c8c;
}

.hierarchy {
    width: 336px;
}

.hierarchy .search {
    margin: 0 4px 0 7px;
}

.scene {
    flex: none;
    display: flex;
    align-items: center;
    gap: 4px;
    height: 15px;
    padding-left: 32px;
    background: #e3e3e3;
    color: #222;
}

.scene .more {
    margin: 0 10px 0 auto;
}

.objects {
    flex: 1;
    background: linear-gradient(90deg, #acacac 30px, #c2c2c2 30px);
}

.objects li {
    display: flex;
    align-items: center;
    gap: 3px;
    height: 15px;
    padding-left: 46px;
}

.objects svg {
    width: 13px;
    height: 13px;
}

.objects .selected {
    background: linear-gradient(90deg, #999 30px, #aeaeae 30px);
}

/* animator window */
.animator {
    flex: 1;
}

.animator-body {
    flex: 1;
    display: flex;
    min-height: 0;
}

.params {
    width: 220px;
    border-right: 1px solid #777;
}

.modes button {
    height: 19px;
    padding: 0 4px;
    border-right: 1px solid #aaa;
}

.modes button:first-child {
    margin-left: 4px;
}

.modes .on {
    background: #efefef;
}

.modes .eye {
    margin-left: auto;
    border: 0;
}

.params .search {
    margin: 0 12px 0 9px;
}

.params .add {
    margin: 0 5px;
}

.param {
    display: flex;
    align-items: center;
    gap: 5px;
    height: 23px;
    padding: 0 7px 0 4px;
    border-bottom: 1px solid #999;
    background: #cbcbcb;
}

.param.on {
    background: #aeaeae;
}

.param label {
    flex: 1;
}

.param input[type="text"] {
    width: 45px;
}

.graph {
    flex: 1;
    display: flex;
    flex-direction: column;
    min-width: 0;
}

.crumbs {
    padding-left: 1px;
}

.crumbs button {
    padding: 0 5px;
}

.crumbs .live {
    height: 19px;
    margin-left: auto;
    background: #efefef;
}

.canvas {
    flex: 1;
    position: relative;
    overflow: hidden;
    background-color: #5d5d5d;
    background-image:
        linear-gradient(90deg, #464646 1px, transparent 1px),
        linear-gradient(#464646 1px, transparent 1px),
        linear-gradient(90deg, #555 1px, transparent 1px),
        linear-gradient(#555 1px, transparent 1px);
    background-size: 80px 80px, 80px 80px, 8px 8px, 8px 8px;
    background-position: 53px 3px;
    box-shadow: inset 0 4px 6px rgba(0, 0, 0, 0.25);
}

.edges {
    position: absolute;
    width: 100%;
    height: 100%;
}

.edges path {
    fill: none;
    stroke: #fff;
    stroke-width: 2px;
    marker-mid: url(#arrow);
}

.edges .entry-edge {
    stroke: #8f6200;
    marker-mid: url(#arrow-entry);
}

.edges marker path {
    fill: #fff;
    stroke: none;
    marker-mid: none;
}

.edges #arrow-entry path {
    fill: #8f6200;
}

/* state nodes */
.node {
    position: absolute;
    width: 160px;
    height: 31px;
    padding-top: 4px;
    text-align: center;
    white-space: nowrap;
    font-size: 10px;
    border-radius: 3px;
    background: linear-gradient(#b4b4b4, #8c8c8c);
    box-shadow: 0 1px 3px rgba(0, 0, 0, 0.6);
}

.node.small {
    width: 128px;
    height: 24px;
}

.n-attack { left: 21px; top: 148px; }
.n-death { left: 181px; top: 108px; }
.n-jump { left: 452px; top: 68px; }
.n-wall { left: 524px; top: 148px; }
.n-default { left: 157px; top: 244px; background: linear-gradient(#ffc04d, #e87000); }
.n-any { left: 372px; top: 244px; background: linear-gradient(#8adfc9, #5fb5a7); }
.n-move { left: 545px; top: 244px; }
.n-duck { left: 363px; top: 321px; }
.n-entry { left: 173px; top: 339px; background: linear-gradient(#6fe060, #00ba08 70%); }
.n-exit { left: 770px; top: 339px; background: linear-gradient(#ea5c5c, #da0000 70%); }

.n-up {
    left: 535px;
    top: 340px;
    padding-top: 8px;
    clip-path: polygon(0 50%, 8% 0, 92% 0, 100% 50%, 92% 100%, 8% 100%);
}

.path {
    flex: none;
    height: 18px;
    padding: 2px 4px 0;
    text-align: right;
    font-size: 10px;
    background: #cbcbcb;
}

/* project window */
.project {
    flex: none;
    height: 321px;
    border-top: 1px solid #808080;
}

.project .tab:first-child {
    padding: 0 12px 0 6px;
}

.asset-search {
    flex: none;
    width: 281px;
    margin-left: auto;
}

.filters {
    display: flex;
    margin-left: 2px;
}

.filters button {
    width: 24px;
    height: 19px;
    border-left: 1px solid #aaa;
}

.filters .faded {
    color: #8c8c8c;
}

.filters .hidden-count {
    width: 39px;
    gap: 2px;
    font-size: 12px;
}

.project-body {
    flex: 1;
    display: flex;
    min-height: 0;
}

.folders {
    display: flex;
    width: 186px;
    border-right: 1px solid #999;
}

.folders ul {
    flex: 1;
    overflow: hidden;
}

.folders li {
    display: flex;
    align-items: center;
    gap: 3px;
    height: 15px;
    padding-left: 4px;
    white-space: nowrap;
}

.folders li svg {
    width: 12px;
    height: 11px;
    margin-left: 2px;
}

.folders .gold {
    color: #d29a16;
}

.folders .d1 { padding-left: 17px; }
.folders .d2 { padding-left: 30px; }
.folders .d3 { padding-left: 43px; }

.folders .last {
    margin-bottom: 14px;
}

.scroll {
    flex: none;
    display: flex;
    flex-direction: column;
    align-items: center;
    justify-content: space-between;
    width: 12px;
    padding: 4px 0;
    background: #b8b8b8;
}

.scroll i {
    width: 6px;
    height: 5px;
    background: #555;
}

.thumb {
    width: 8px;
    height: 104px;
    margin: 5px 0 auto;
    border-radius: 4px;
    background: #999;
}

.thumb.long {
    height: 224px;
    margin-top: 7px;
}

.assets {
    flex: 1;
    display: flex;
    flex-direction: column;
    min-width: 0;
    background: #bebebe;
}

.asset-path {
    display: flex;
    align-items: center;
    gap: 6px;
    height: 19px;
    padding-left: 4px;
    background: #cecece;
}

.asset-path a {
    color: inherit;
    text-decoration: none;
}

.files {
    flex: 1;
    display: flex;
    padding: 9px 8px;
}

.files figure {
    width: 71px;
    text-align: center;
    font-size: 9px;
}

.files svg {
    width: 52px;
    height: 60px;
    margin: 0 auto;
}

.zoom {
    display: flex;
    align-items: center;
    justify-content: flex-end;
    height: 20px;
    padding-right: 14px;
    background: #cecece;
    border-top: 1px solid #b0b0b0;
}

.zoom input {
    appearance: none;
    width: 52px;
    height: 2px;
    background: #8a8a8a;
}

.zoom input::-webkit-slider-thumb {
    appearance: none;
    width: 9px;
    height: 9px;
    border-radius: 50%;
    background: #555;
}

/* inspector */
.inspector {
    flex: none;
    width: 394px;
}

.inspector-body {
    flex: 1;
    display: flex;
    min-height: 0;
}

.inspector .tab {
    padding: 0 14px 0 9px;
}

.components {
    flex: 1;
    min-width: 0;
    overflow: hidden;
}

.object {
    display: flex;
    height: 56px;
    padding: 10px 5px 0 6px;
    background: #cbcbcb;
}

.object-icon {
    align-items: flex-end;
    align-self: flex-start;
    width: 29px;
}

.object-fields {
    flex: 1;
    display: flex;
    flex-direction: column;
    gap: 6px;
    padding-left: 5px;
}

.line {
    display: flex;
    align-items: center;
    gap: 4px;
}

.line input:first-child {
    margin-left: 4px;
}

.line .name {
    flex: 1;
    margin-left: 3px;
    font-weight: 700;
}

.line svg {
    margin-right: 1px;
}

.line select {
    flex: 137;
}

.line .layer {
    margin-left: 9px;
}

.line .layer + select {
    flex: 127;
}

article {
    border-top: 1px solid #949494;
}

article h2 {
    display: flex;
    align-items: center;
    height: 18px;
    padding: 0 7px 0 6px;
    gap: 5px;
    background: #cbcbcb;
    font-size: 11px;
    font-weight: 700;
}

article h2 input, .no-check {
    flex: none;
    width: 12px;
    margin-right: 2px;
}

.tools {
    display: flex;
    align-items: center;
    gap: 8px;
    margin-left: auto;
}

.tools svg {
    width: 11px;
    height: 10px;
}

.rows {
    display: flex;
    flex-direction: column;
    gap: 3px;
    padding: 6px 4px 7px 18px;
}

.transform {
    padding-bottom: 10px;
}

.row {
    display: grid;
    grid-template-columns: 141px 1fr;
    align-items: center;
    height: 16px;
}

.row.after {
    margin-bottom: 2px;
}

.row.tall {
    height: 20px;
}

.row.sub label {
    padding-left: 14px;
    white-space: nowrap;
}

.row.inset {
    padding-left: 3px;
}

.row.foldout {
    display: flex;
    gap: 4px;
    margin-left: -12px;
}

.vec {
    display: grid;
    grid-template-columns: 12px 1fr 18px 1fr 18px 1fr;
    align-items: center;
}

.vec label + input + label {
    padding-left: 6px;
}

.checks {
    display: flex;
    align-items: center;
    gap: 4px;
}

.ref {
    display: flex;
    align-items: center;
    height: 16px;
    background: #ededed;
    border: 1px solid #b4b4b4;
    border-radius: 2px;
}

.ref > svg {
    margin-left: 2px;
}

.ref input[type="text"] {
    flex: 1;
    height: 14px;
    border: 0;
    background: none;
}

.ref button {
    width: 17px;
    height: 14px;
    background: #dedede;
}

.ref.color input[type="text"] {
    background: #fff;
}

.ref.color button {
    background: #c8c8c8;
}

.helpbox {
    display: flex;
    align-items: center;
    gap: 4px;
    height: 62px;
    margin: -2px 0 1px -1px;
    padding: 0 2px;
    border: 1px solid #a8a8a8;
    border-radius: 2px;
    background: #c8c8c8;
}

.helpbox p {
    align-self: flex-start;
    padding: 3px 16px 0 0;
    font-size: 9px;
    line-height: 11px;
}

.edit {
    width: 28px;
    height: 20px;
    background: #e0e0e0;
    border: 1px solid #b0b0b0;
}

/* status bar */
.statusbar {
    flex: none;
    display: flex;
    justify-content: flex-end;
    height: 20px;
    background: #8a8a8a;
}

.statusbar button {
    width: 25px;
    border-left: 1px solid #949494;
}

/* windows taskbar */
.taskbar {
    flex: none;
    display: flex;
    height: 38px;
    background: #282219;
    color: #fff;
    font-family: "Open Sans", "Noto Sans", sans-serif;
}

.start {
    width: 45px;
}

.win-search {
    display: flex;
    align-items: center;
    gap: 9px;
    width: 322px;
    padding-left: 11px;
    background: #f2f2f2;
    color: #333;
}

.win-search input[type="text"] {
    flex: 1;
    height: 20px;
    border: 0;
    background: none;
    font-size: 13px;
}

.win-search input::placeholder {
    color: #333;
}

.apps {
    display: flex;
}

.apps button {
    position: relative;
    width: 46px;
    height: 38px;
    padding-left: 1px;
}

.apps .running::after {
    content: "";
    position: absolute;
    left: 4px;
    right: 4px;
    bottom: 0;
    height: 2px;
    background: #99e0f5;
}

.apps .current {
    background: #57534b;
}

.apps .running.current::after {
    left: 0;
    right: 0;
}

.unity-tile {
    display: flex;
    align-items: center;
    justify-content: center;
    width: 20px;
    height: 20px;
    background: #0c0c0c;
}

.word {
    font: 700 9px "Open Sans", sans-serif;
    fill: #fff;
}

.badge {
    position: absolute;
    right: 3px;
    bottom: 4px;
    width: 15px;
    height: 15px;
    border: 1px solid #999;
    border-radius: 50%;
    background: #282219;
    font-size: 10px;
    line-height: 13px;
    text-align: center;
}

.tray {
    display: flex;
    align-items: center;
    gap: 8px;
    margin-left: auto;
}

.tray time {
    width: 57px;
    text-align: center;
    font-size: 11px;
    line-height: 16px;
}

.notify {
    position: relative;
    width: 30px;
    height: 38px;
}

.desktop {
    width: 5px;
    height: 38px;
    border-left: 1px solid #777;
}
```
